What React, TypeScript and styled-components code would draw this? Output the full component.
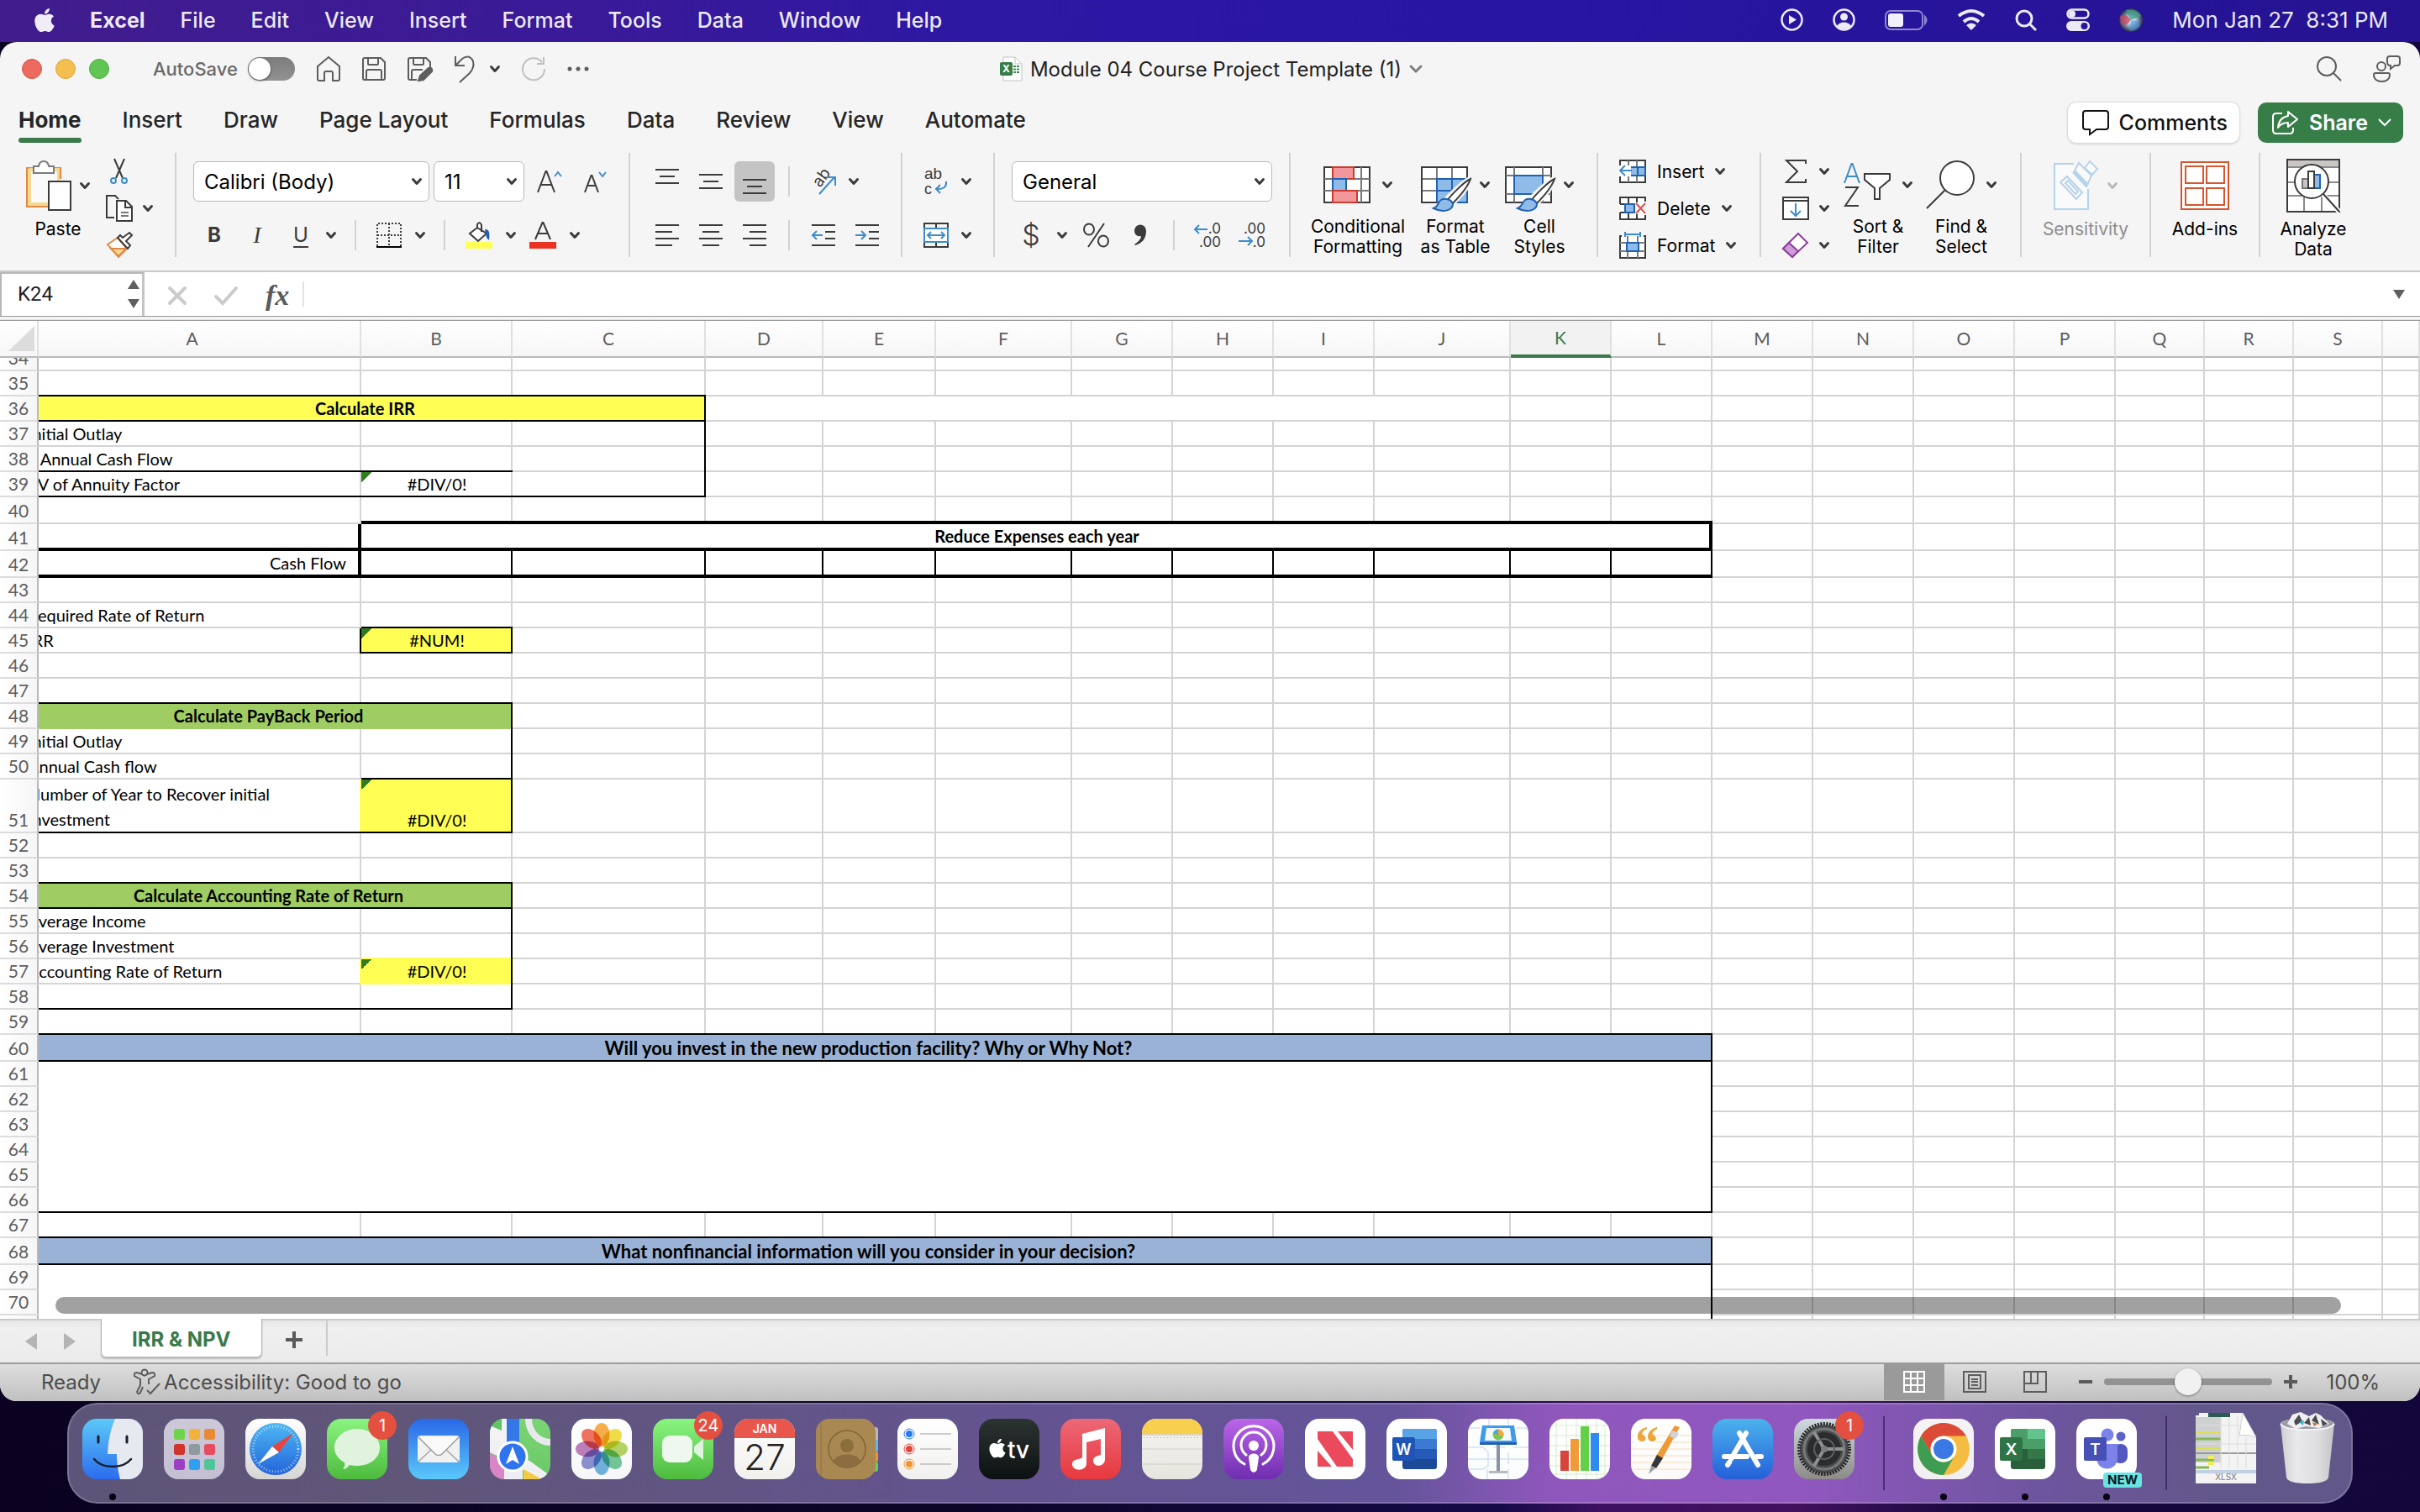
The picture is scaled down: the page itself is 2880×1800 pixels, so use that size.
import React from "react";
import styled, { createGlobalStyle, css } from "styled-components";
import { FaApple } from "react-icons/fa";

const UI = `Inter, "Liberation Sans", sans-serif`;
const SHEET = `Lato, "Open Sans", sans-serif`;
const INK = "#3b3b3b";
const BLUE = "#3d8ccb";
const DEEP = "#1f62b3";
const PALE = "#8fbbe8";
const GREEN = "#3a7a4a";
const GRID = "#d4d4d4";

const GlobalStyle = createGlobalStyle`
  *, *::before, *::after { box-sizing: border-box; }
  html, body { margin: 0; height: 100%; overflow: hidden; }
  body { font-family: ${UI}; color: #1f1f1f; -webkit-font-smoothing: antialiased; }
  button, input, select { font: inherit; color: inherit; border: 0; margin: 0; padding: 0; background: none; outline: none; }
  svg { display: block; overflow: visible; flex: none; }
`;

const Desktop = styled.div`
  display: flex;
  flex-direction: column;
  height: 100vh;
  background: linear-gradient(90deg, #0a0220 0%, #0d0528 40%, #150a48 62%, #3d1060 66%, #42115f 74%, #16083c 82%, #12063a 100%);
`;

/* ---------- system menu bar ---------- */
const MenuBar = styled.header`
  display: flex;
  align-items: center;
  flex: none;
  height: 50px;
  padding: 0 38px 3px 37px;
  color: rgba(255, 255, 255, 0.92);
  font-size: 25px;
  font-weight: 500;
  background: linear-gradient(90deg, #401c8c 0%, #3a1a98 24%, #2d18a3 40%, #2815a4 60%, #251392 100%);
`;
const Menus = styled.nav`
  display: flex;
  gap: 42px;
  margin-left: 38px;
`;
const MenuItem = styled.button<{ $strong?: boolean }>`
  line-height: 46px;
  font-weight: ${(p) => (p.$strong ? 700 : 500)};
`;
const Tray = styled.div`
  display: flex;
  align-items: center;
  gap: 35px;
  margin-left: auto;
`;
const Clock = styled.time`
  white-space: pre;
  font-size: 26px;
  font-weight: 400;
`;

/* ---------- window ---------- */
const Window = styled.main`
  display: flex;
  flex-direction: column;
  flex: 1;
  min-height: 0;
  overflow: hidden;
  border-radius: 20px;
  background: #f5f5f5;
`;
const TitleBar = styled.div`
  display: grid;
  grid-template-columns: 1fr auto 1fr;
  align-items: center;
  flex: none;
  height: 64px;
  padding: 0 23px 0 26px;
`;
const TitleSide = styled.div<{ $end?: boolean }>`
  display: flex;
  align-items: center;
  gap: ${(p) => (p.$end ? 37 : 26)}px;
  justify-content: ${(p) => (p.$end ? "flex-end" : "flex-start")};
`;
const Lights = styled.div`
  display: flex;
  gap: 16px;
  margin-right: 26px;
`;
const Light = styled.button<{ $c: string; $edge: string }>`
  width: 24px;
  height: 24px;
  border-radius: 50%;
  background: ${(p) => p.$c};
  border: 1px solid ${(p) => p.$edge};
`;
const AutoSave = styled.label`
  display: flex;
  align-items: center;
  gap: 12px;
  font-size: 22px;
  font-weight: 500;
  color: #6a6a6a;
`;
const Switch = styled.input`
  appearance: none;
  width: 56px;
  height: 28px;
  border-radius: 14px;
  background: linear-gradient(180deg, #7c7c7c, #929292);
  &::before {
    content: "";
    display: block;
    width: 26px;
    height: 26px;
    margin: 1px;
    border-radius: 50%;
    background: #fff;
    box-shadow: 0 1px 3px rgba(0, 0, 0, 0.5);
  }
`;
const IconButton = styled.button`
  display: flex;
  align-items: center;
  gap: 18px;
`;
const DocTitle = styled.h1`
  display: flex;
  align-items: center;
  gap: 9px;
  margin: 0;
  font-size: 24px;
  font-weight: 400;
  color: #222;
`;

const TabRow = styled.div`
  display: flex;
  align-items: flex-start;
  flex: none;
  height: 56px;
  padding: 0 20px 0 22px;
`;
const RibbonTabs = styled.nav`
  display: flex;
  gap: 49px;
`;
const RibbonTab = styled.button<{ $active?: boolean }>`
  height: 56px;
  padding-top: 8px;
  line-height: 42px;
  font-size: 26px;
  font-weight: ${(p) => (p.$active ? 700 : 500)};
  color: #262626;
  &::after {
    content: "";
    display: block;
    height: 6px;
    border-radius: 3px;
    background: ${(p) => (p.$active ? GREEN : "transparent")};
  }
`;
const TabActions = styled.div`
  display: flex;
  gap: 22px;
  margin: 8px 0 0 auto;
`;
const ActionButton = styled.button<{ $primary?: boolean }>`
  display: flex;
  align-items: center;
  gap: 12px;
  height: 48px;
  padding: 0 14px 0 17px;
  border-radius: 10px;
  font-size: 25px;
  font-weight: ${(p) => (p.$primary ? 600 : 500)};
  color: ${(p) => (p.$primary ? "#fff" : "#111")};
  background: ${(p) => (p.$primary ? "#377d48" : "#fff")};
  box-shadow: ${(p) => (p.$primary ? "none" : "0 0 0 1px #dcdcdc, 0 1px 3px rgba(0,0,0,.25)")};
`;

/* ---------- ribbon ---------- */
const Ribbon = styled.div`
  display: flex;
  flex: none;
  height: 154px;
  padding-top: 12px;
  border-bottom: 2px solid #c9c9c9;
`;
const Group = styled.section<{ $w: number; $pad?: number; $last?: boolean }>`
  display: flex;
  flex: none;
  width: ${(p) => p.$w}px;
  height: 124px;
  padding-left: ${(p) => p.$pad ?? 0}px;
  border-right: ${(p) => (p.$last ? "0" : "2px solid #d2d2d2")};
`;
const TwoRows = styled.div`
  display: grid;
  grid-template-rows: 48px 48px;
  gap: 16px;
  align-content: start;
  padding-top: 10px;
`;
const ThreeRows = styled.div`
  display: grid;
  grid-template-rows: repeat(3, 44px);
  align-content: start;
`;
const ToolRow = styled.div<{ $gap?: number }>`
  display: flex;
  align-items: center;
  gap: ${(p) => p.$gap ?? 0}px;
`;
const Tool = styled.button<{ $w?: number }>`
  display: flex;
  align-items: center;
  justify-content: center;
  flex: none;
  width: ${(p) => p.$w ?? 52}px;
  height: 100%;
`;
const Pressed = styled.span<{ $on?: boolean }>`
  display: flex;
  align-items: center;
  justify-content: center;
  width: 48px;
  height: 48px;
  border-radius: 6px;
  background: ${(p) => (p.$on ? "#c4c4c4" : "none")};
`;
const Glyph = styled.span<{ $kind?: "bold" | "italic" | "under" | "big" }>`
  font-size: 24px;
  line-height: 30px;
  color: ${INK};
  ${(p) => p.$kind === "bold" && css`font-weight: 700;`}
  ${(p) => p.$kind === "italic" && css`font-family: "Liberation Serif", serif; font-style: italic; font-size: 28px;`}
  ${(p) => p.$kind === "under" && css`text-decoration: underline; text-decoration-thickness: 2px; text-underline-offset: 5px;`}
  ${(p) => p.$kind === "big" && css`font-size: 34px; font-weight: 300;`}
`;
const Rule = styled.span<{ $m: number }>`
  flex: none;
  width: 2px;
  height: 36px;
  margin: 0 ${(p) => p.$m}px;
  background: #d2d2d2;
`;
const BigTool = styled.button<{ $w: number; $muted?: boolean }>`
  display: flex;
  flex-direction: column;
  align-items: center;
  justify-content: flex-start;
  gap: 8px;
  flex: none;
  width: ${(p) => p.$w}px;
  padding-top: 7px;
  font-size: 21px;
  line-height: 24px;
  color: ${(p) => (p.$muted ? "#8d8d8d" : "#000")};
`;
const BigIcon = styled.span<{ $gap?: number }>`
  display: flex;
  align-items: center;
  gap: ${(p) => p.$gap ?? 14}px;
  height: 64px;
`;
const LineTool = styled.button`
  display: flex;
  align-items: center;
  gap: 13px;
  font-size: 21px;
  color: #000;
`;
const SelectBox = styled.span<{ $w: number }>`
  position: relative;
  display: block;
  width: ${(p) => p.$w}px;
  height: 48px;
  svg {
    position: absolute;
    right: 9px;
    top: 20px;
    pointer-events: none;
  }
`;
const Select = styled.select`
  appearance: none;
  width: 100%;
  height: 100%;
  padding: 0 30px 0 12px;
  border: 1px solid #b9b9b9;
  border-radius: 6px;
  background: #fff;
  font-size: 24px;
  color: #000;
`;

/* ---------- formula bar ---------- */
const FormulaBar = styled.div`
  display: flex;
  align-items: center;
  flex: none;
  height: 52px;
  background: #fff;
`;
const NameBox = styled.div`
  display: flex;
  align-items: center;
  justify-content: space-between;
  width: 172px;
  height: 52px;
  padding: 0 3px 2px 19px;
  border: 2px solid #b8b8b8;
  border-bottom: 0;
  border-right: 3px solid #c4c4c4;
`;
const NameInput = styled.input`
  width: 110px;
  font-family: Roboto, sans-serif;
  font-size: 24px;
`;
const FormulaTools = styled.div`
  display: flex;
  align-items: center;
  gap: 33px;
  padding: 4px 16px 0 28px;
`;
const Fx = styled.button`
  font-family: "Liberation Serif", serif;
  font-style: italic;
  font-weight: 700;
  font-size: 34px;
  line-height: 36px;
  color: #5a5a5a;
`;
const FormulaInput = styled.input`
  flex: 1;
  height: 30px;
  border-left: 2px solid #e2e2e2;
  font-size: 24px;
`;
const DropButton = styled.button`
  padding-right: 18px;
`;
const DoubleLine = styled.div`
  flex: none;
  height: 6px;
  border-top: 1px solid #9a9a9a;
  border-bottom: 1px solid #9a9a9a;
  background: linear-gradient(180deg, #e2e2e2, #fff 50%, #d8d8d8);
`;

/* ---------- sheet ---------- */
const SheetArea = styled.div`
  position: relative;
  flex: 1;
  min-height: 0;
`;
const Scroller = styled.div`
  height: 100%;
  overflow: hidden;
  background: #fff;
`;
const Table = styled.table`
  table-layout: fixed;
  width: calc(100% + 17px);
  margin: -14px 0 0 -17px;
  border-collapse: separate;
  border-spacing: 0;
  font-family: ${SHEET};
  font-size: 20px;
  line-height: 28px;
  color: #000;
  white-space: nowrap;
`;
const ColHead = styled.th<{ $on?: boolean }>`
  position: sticky;
  top: 0;
  z-index: 2;
  height: 44px;
  padding: 0;
  overflow: hidden;
  font-weight: 400;
  font-size: 21px;
  vertical-align: middle;
  color: ${(p) => (p.$on ? GREEN : "#5e5e5e")};
  background: ${(p) => (p.$on ? "#f2f2f2" : "linear-gradient(180deg, #fff, #f6f6f6)")};
  border-right: 2px solid #e0e0e0;
  border-bottom: ${(p) => (p.$on ? `4px solid ${GREEN}` : "2px solid #b9b9b9")};
`;
const Corner = styled(ColHead)`
  left: 0;
  z-index: 3;
  svg {
    margin-left: 10px;
  }
`;
const RowHead = styled.th`
  position: sticky;
  left: 0;
  z-index: 1;
  padding: 0;
  font-weight: 400;
  font-size: 21px;
  text-align: center;
  vertical-align: bottom;
  color: #5e5e5e;
  background: linear-gradient(90deg, #fff, #f6f6f6);
  border-right: 2px solid #b9b9b9;
  border-bottom: 2px solid #dcdcdc;
`;
type CellStyle = {
  $bg?: string; $b?: string; $bw?: number; $r?: string; $rw?: number;
  $align?: string; $strong?: boolean; $flag?: boolean; $wrap?: boolean; $large?: boolean;
};
/* Edges are painted as background strips so that a dark edge always runs
   unbroken over the light gridlines that meet it. */
const edges = (p: CellStyle) => {
  const b = p.$b ?? GRID;
  const r = p.$r ?? GRID;
  const bottom = `linear-gradient(${b}, ${b}) 0 100% / 100% ${p.$bw ?? 2}px no-repeat`;
  const right = `linear-gradient(${r}, ${r}) 100% 0 / ${p.$rw ?? 2}px 100% no-repeat`;
  const flag = p.$flag ? "linear-gradient(135deg, #2f7d1e 50%, transparent 50%) 0 0 / 12px 12px no-repeat, " : "";
  const pair = b === "#000" ? `${bottom}, ${right}` : `${right}, ${bottom}`;
  return `${flag}${pair}, ${p.$bg ?? "#fff"}`;
};
const Cell = styled.td<CellStyle>`
  overflow: hidden;
  padding: 0 ${(p) => (p.$align === "right" || p.$wrap ? 18 : 4)}px ${(p) => p.$bw ?? 2}px 4px;
  vertical-align: bottom;
  text-align: ${(p) => p.$align ?? "left"};
  font-weight: ${(p) => (p.$strong ? 700 : 400)};
  font-size: ${(p) => (p.$large ? 22 : 20)}px;
  line-height: ${(p) => (p.$wrap ? 30 : 28)}px;
  white-space: ${(p) => (p.$wrap ? "normal" : "pre")};
  background: ${edges};
`;
const HScroll = styled.div`
  position: absolute;
  left: 66px;
  right: 94px;
  bottom: 6px;
  height: 20px;
  border-radius: 10px;
  background: rgba(0, 0, 0, 0.37);
`;

type CellSpec = {
  n?: number; rows?: number; t?: string; bg?: string; b?: string; bw?: number; r?: string; rw?: number;
  align?: string; strong?: boolean; flag?: boolean; wrap?: boolean; large?: boolean;
};
type RowSpec = { no: number | null; h?: number; skip?: number; cells?: CellSpec[] };

const K = "#000";
const YEL = "#fffe54";
const GRN = "#a0cd63";
const BLU = "#9ab2d5";
const blanks = (n: number, extra: CellSpec = {}): CellSpec[] => Array.from({ length: n }, () => ({ ...extra }));

const ROWS: RowSpec[] = [
  { no: 34 },
  { no: 35, cells: blanks(3, { b: K }) },
  { no: 36, cells: [{ n: 3, t: "Calculate IRR", bg: YEL, b: K, r: K, align: "center", strong: true }, { n: 7 }] },
  { no: 37, cells: [{ t: "Initial Outlay" }, {}, { r: K }] },
  { no: 38, cells: [{ t: "   Annual Cash Flow", b: K }, { b: K }, { r: K }] },
  { no: 39, cells: [{ t: "PV of Annuity Factor", b: K }, { t: "#DIV/0!", align: "center", flag: true, b: K }, { b: K, r: K }] },
  { no: 40, h: 32, cells: [{}, ...blanks(11, { b: K, bw: 4 })] },
  { no: 41, h: 32, cells: [{ b: K, bw: 4, r: K, rw: 4 }, { n: 11, t: "Reduce Expenses each year", align: "center", strong: true, b: K, bw: 4, r: K, rw: 4 }] },
  { no: 42, h: 32, cells: [{ t: "Cash Flow", align: "right", b: K, bw: 4, r: K, rw: 4 }, ...blanks(11, { b: K, bw: 4, r: K })] },
  { no: 43 },
  { no: 44, cells: [{ t: "Required Rate of Return" }, { b: K }] },
  { no: 45, cells: [{ t: "IRR", r: K }, { t: "#NUM!", align: "center", flag: true, bg: YEL, b: K, r: K }] },
  { no: 46 },
  { no: 47, cells: blanks(2, { b: K }) },
  { no: 48, cells: [{ n: 2, t: "Calculate PayBack Period", bg: GRN, b: GRN, r: K, align: "center", strong: true }] },
  { no: 49, cells: [{ t: "Initial Outlay" }, { r: K }] },
  { no: 50, cells: [{ t: "Annual Cash flow" }, { r: K, b: K }] },
  { no: 51, h: 64, cells: [{ t: "Number of Year to Recover initial Investment", wrap: true, b: K, r: YEL }, { t: "#DIV/0!", align: "center", flag: true, bg: YEL, b: K, r: K }] },
  { no: 52 },
  { no: 53, cells: blanks(2, { b: K }) },
  { no: 54, cells: [{ n: 2, t: "Calculate Accounting Rate of Return", bg: GRN, b: K, r: K, align: "center", strong: true }] },
  { no: 55, cells: [{ t: "Average Income" }, { r: K }] },
  { no: 56, cells: [{ t: "Average Investment" }, { r: K, b: YEL }] },
  { no: 57, cells: [{ t: "Accounting Rate of Return", r: YEL }, { t: "#DIV/0!", align: "center", flag: true, bg: YEL, b: YEL, r: K }] },
  { no: 58, cells: [{ b: K }, { b: K, r: K }] },
  { no: 59, cells: blanks(12, { b: K }) },
  { no: 60, h: 32, cells: [{ n: 12, t: "Will you invest in the new production facility? Why or Why Not?", bg: BLU, b: K, r: K, align: "center", strong: true, large: true }] },
  { no: 61, cells: [{ n: 12, rows: 6, b: K, r: K }] },
  { no: 62, skip: 12 }, { no: 63, skip: 12 }, { no: 64, skip: 12 }, { no: 65, skip: 12 }, { no: 66, skip: 12 },
  { no: 67, cells: blanks(12, { b: K }) },
  { no: 68, h: 32, cells: [{ n: 12, t: "What nonfinancial information will you consider in your decision?", bg: BLU, b: K, r: K, align: "center", strong: true, large: true }] },
  { no: 69, cells: [{ n: 12, rows: 3, r: K }] },
  { no: 70, skip: 12 }, { no: null, skip: 12 },
];
const COLS: [string, number | undefined][] = [
  ["A", 401], ["B", 180], ["C", 230], ["D", 140], ["E", 134], ["F", 162], ["G", 120], ["H", 120], ["I", 120], ["J", 162],
  ["K", 120], ["L", 120], ["M", 120], ["N", 120], ["O", 120], ["P", 120], ["Q", 106], ["R", 106], ["S", 106], ["", undefined],
];

const Sheet = () => (
  <Table>
    <colgroup>
      <col width={46} />
      {COLS.map(([l, w], i) => <col key={l || i} width={w} />)}
    </colgroup>
    <thead>
      <tr>
        <Corner aria-label="Select all">
          <svg width="31" height="30" viewBox="0 0 31 30"><path d="M31 0V30H0Z" fill="#dcdcdc" /></svg>
        </Corner>
        {COLS.map(([l], i) => <ColHead key={l || i} $on={l === "K"} scope="col">{l}</ColHead>)}
      </tr>
    </thead>
    <tbody>
      {ROWS.map((row, ri) => {
        const cells = row.cells ?? [];
        const used = (row.skip ?? 0) + cells.reduce((s, c) => s + (c.n ?? 1), 0);
        const all = [...cells, ...blanks(COLS.length - used)];
        return (
          <tr key={ri} style={{ height: row.h ?? 30 }}>
            <RowHead scope="row">{row.no}</RowHead>
            {all.map((c, i) => (
              <Cell key={i} colSpan={c.n} rowSpan={c.rows} $bg={c.bg} $b={c.b} $bw={c.bw} $r={c.r} $rw={c.rw}
                $align={c.align} $strong={c.strong} $flag={c.flag} $wrap={c.wrap} $large={c.large}>{c.t}</Cell>
            ))}
          </tr>
        );
      })}
    </tbody>
  </Table>
);

/* ---------- sheet tabs and status ---------- */
const SheetTabs = styled.div`
  display: flex;
  flex: none;
  height: 54px;
  padding-left: 30px;
  border-top: 2px solid #cbcbcb;
  border-bottom: 2px solid #9c9c9c;
  background: linear-gradient(180deg, #e6e6e6, #f0f0f0 20%, #ebebeb);
`;
const TabArrows = styled.div`
  display: flex;
  gap: 32px;
  padding: 15px 30px 0 0;
  height: 40px;
`;
const SheetTab = styled.button`
  height: 46px;
  margin-top: -2px;
  padding: 4px 36px 0;
  border: 1px solid #b4b4b4;
  border-top: 0;
  border-radius: 0 0 6px 6px;
  background: #fff;
  box-shadow: 0 2px 2px rgba(0, 0, 0, 0.2);
  font-size: 24px;
  font-weight: 700;
  color: ${GREEN};
`;
const AddTab = styled.button`
  display: flex;
  justify-content: center;
  align-items: center;
  width: 78px;
  height: 42px;
  padding-top: 4px;
  border-right: 2px solid #cbcbcb;
`;
const StatusBar = styled.footer`
  display: flex;
  align-items: center;
  flex: none;
  height: 44px;
  padding: 0 0 2px 49px;
  font-size: 24px;
  color: #4c4c4c;
  background: linear-gradient(180deg, #dedede, #c0c0c0);
`;
const Access = styled.button`
  display: flex;
  align-items: center;
  gap: 3px;
  margin-left: 38px;
`;
const StatusRight = styled.div`
  display: flex;
  align-items: center;
  height: 44px;
  margin-left: auto;
  padding-right: 48px;
`;
const ViewButton = styled.button<{ $on?: boolean }>`
  display: flex;
  align-items: center;
  justify-content: center;
  width: 72px;
  height: 44px;
  background: ${(p) => (p.$on ? "#9a9a9a" : "none")};
`;
const ZoomControl = styled.label`
  display: flex;
  align-items: center;
  gap: 14px;
  padding: 0 34px 0 16px;
`;
const ZoomRange = styled.input`
  appearance: none;
  width: 200px;
  height: 34px;
  &::-webkit-slider-runnable-track {
    height: 8px;
    border-radius: 4px;
    background: #929292;
  }
  &::-webkit-slider-thumb {
    appearance: none;
    width: 32px;
    height: 32px;
    margin-top: -12px;
    border-radius: 50%;
    background: #f1f1f1;
    box-shadow: 0 1px 3px rgba(0, 0, 0, 0.4);
  }
`;

/* ---------- dock ---------- */
const Dock = styled.nav`
  display: flex;
  flex: none;
  gap: 25px;
  width: max-content;
  height: 120px;
  margin: 2px auto 10px;
  padding: 17px 16px 0;
  border: 2px solid rgba(255, 255, 255, 0.18);
  border-radius: 36px;
  background: linear-gradient(90deg, #5d5479 0%, #5f5678 15%, #63548f 40%, #64549a 58%, #8f57bc 65%, #9057bf 76%, #6f55a0 86%, #62578a 94%, #615789 100%);
`;
const DockItem = styled.button`
  position: relative;
  display: flex;
  justify-content: center;
  width: 72px;
  height: 72px;
`;
const DockRule = styled.span`
  width: 2px;
  height: 88px;
  margin: -3px 9px 0;
  background: rgba(40, 15, 80, 0.6);
`;
const Badge = styled.span`
  position: absolute;
  left: 49px;
  top: -9px;
  width: 34px;
  height: 34px;
  border-radius: 50%;
  background: #e4503f;
  color: #fff;
  font-size: 20px;
  line-height: 34px;
  text-align: center;
`;
const RunDot = styled.span`
  position: absolute;
  left: 32px;
  bottom: -25px;
  width: 8px;
  height: 8px;
  border-radius: 50%;
  background: #05010f;
`;
const NewTag = styled.span`
  position: absolute;
  left: 32px;
  bottom: -10px;
  padding: 0 5px;
  border-radius: 4px;
  background: #6be3e4;
  color: #071a1e;
  font-size: 15px;
  line-height: 18px;
  font-weight: 700;
`;

/* ---------- shared icon helpers ---------- */
type S = { w: number; h: number; children?: React.ReactNode; stroke?: string; sw?: number };
const Svg = ({ w, h, children, stroke = INK, sw = 2 }: S) => (
  <svg width={w} height={h} viewBox={`0 0 ${w} ${h}`} fill="none" stroke={stroke} strokeWidth={sw}>{children}</svg>
);
const Chevron = ({ c = INK }: { c?: string }) => (
  <Svg w={12} h={8} stroke={c} sw={3}><path d="M1.5 1.5 6 6.5 10.5 1.5" strokeLinecap="round" strokeLinejoin="round" /></Svg>
);
const Lines = ({ rows }: { rows: [number, number][] }) => (
  <Svg w={28} h={rows.length === 3 ? 18 : 26}>
    {rows.map(([a, b], i) => <path key={i} d={`M${a} ${i * 8 + 1}H${b}`} />)}
  </Svg>
);
const Plus = () => <Svg w={20} h={20} stroke="#5a5a5a" sw={4}><path d="M10 0V20M0 10H20" /></Svg>;

const Brush = () => (
  <>
    <path d="M60 14C52 18 34 33 27 44L32 49C41 42 56 26 60 14Z" fill="#fff" stroke="#f5f5f5" strokeWidth="6" />
    <path d="M59 15C52 18 37 33 31 41L36 46C44 38 56 24 59 15Z" fill="#fff" stroke={INK} />
    <path d="M15 50C21 48 20 43 24 40C29 37 37 40 38 45C38 52 27 56 15 50Z" fill={PALE} stroke={DEEP} />
  </>
);

/* ---------- dock icon art ---------- */
const Tile = ({ id, top, bottom, children }: { id: string; top: string; bottom: string; children?: React.ReactNode }) => (
  <svg width="72" height="72" viewBox="0 0 72 72">
    <defs>
      <linearGradient id={id} x1="0" y1="0" x2="0" y2="1"><stop offset="0" stopColor={top} /><stop offset="1" stopColor={bottom} /></linearGradient>
      <clipPath id={id + "c"}><rect width="72" height="72" rx="17" /></clipPath>
    </defs>
    <g clipPath={`url(#${id}c)`}>
      <rect width="72" height="72" fill={`url(#${id})`} />
      {children}
    </g>
  </svg>
);
const art = {
  finder: (
    <Tile id="fi" top="#5cc9f9" bottom="#2b6cee">
      <path d="M39 0C33 14 31 26 30 42H41C41 54 43 64 45 72H72V0Z" fill="#e6e9ef" />
      <path d="M19 21V28M53 21V28" stroke="#16202c" strokeWidth="3" strokeLinecap="round" />
      <path d="M14 48C24 60 48 60 58 48" stroke="#16202c" strokeWidth="2.5" fill="none" strokeLinecap="round" />
    </Tile>
  ),
  launchpad: (
    <Tile id="lp" top="#cdc9d8" bottom="#c4bfd2">
      {["#6fd34a", "#f2b338", "#e98a35", "#d0342b", "#8f9a9c", "#e84a5f", "#9b3fc4", "#2f9ff0", "#4fc59a"].map((c, i) => (
        <rect key={i} x={12 + (i % 3) * 18} y={12 + Math.floor(i / 3) * 18} width="13" height="13" rx="3" fill={c} />
      ))}
    </Tile>
  ),
  safari: (
    <Tile id="sa" top="#ffffff" bottom="#d6d6d6">
      <defs><linearGradient id="sab" x1="0" y1="0" x2="0" y2="1"><stop offset="0" stopColor="#4eb8f2" /><stop offset="1" stopColor="#2364da" /></linearGradient></defs>
      <circle cx="36" cy="36" r="31" fill="url(#sab)" />
      <circle cx="36" cy="36" r="27" fill="none" stroke="#fff" strokeOpacity=".6" strokeWidth="3" strokeDasharray="1 2.5" />
      <path d="M57 17 40 40 32 33Z" fill="#e8453a" />
      <path d="M15 54 32 33 40 40Z" fill="#fff" />
    </Tile>
  ),
  messages: (
    <Tile id="ms" top="#8af480" bottom="#4dbb3e">
      <path d="M36 12C51 12 63 22 63 34.500C63 47 51 56 36 56C33 56 30 55.600 27 55C25 58 22 60 19 60C21 57 22 55 21 52C14 48 9 42 9 34.500C9 22 21 12 36 12Z" fill="#e0f3dd" />
    </Tile>
  ),
  mail: (
    <Tile id="ml" top="#2a68e6" bottom="#5bc8fb">
      <rect x="11" y="20" width="50" height="32" rx="4" fill="#f1f1f1" />
      <path d="M12 51 29 35M60 51 43 35" stroke="#a5a5a5" strokeWidth="1.500" />
      <path d="M12 22 32 42C34 44 38 44 40 42L60 22" stroke="#9c9c9c" strokeWidth="1.500" fill="#fafafa" />
    </Tile>
  ),
  maps: (
    <Tile id="mp" top="#7ad474" bottom="#6bc968">
      <path d="M0 0H14V36L0 22Z" fill="#5fc463" />
      <path d="M0 20 20 38V0H14V14L0 8Z" fill="#f3f3f5" />
      <path d="M0 40 20 56V72H0Z" fill="#da86c6" />
      <path d="M0 20 50 52 72 68V72H54L30 54 0 40Z" fill="#f0f0f3" />
      <path d="M40 60 62 72H40Z" fill="#f6c945" />
      <rect x="20" width="15" height="72" fill="#3478e8" />
      <rect x="17" y="50" width="22" height="22" fill="#eceef3" />
      <path d="M46 0C46 16 58 28 72 28" stroke="#e9e9ec" strokeWidth="8" fill="none" />
      <circle cx="27" cy="45" r="17" fill="#2f74ee" stroke="#fff" strokeWidth="3" />
      <path d="M27 33 35 54 27 49 19 54Z" fill="#fff" />
    </Tile>
  ),
  photos: (
    <Tile id="ph" top="#ffffff" bottom="#f6f6f8">
      {["#f5a12a", "#f0d829", "#a9cf4a", "#5fc08c", "#5ba8dc", "#7b7fc9", "#b56bb3", "#ef5a45"].map((c, i) => (
        <ellipse key={c} cx="36" cy="19" rx="9.500" ry="14" fill={c} fillOpacity=".85" transform={`rotate(${i * 45} 36 36)`} style={{ mixBlendMode: "multiply" }} />
      ))}
    </Tile>
  ),
  facetime: (
    <Tile id="ft" top="#8af480" bottom="#4dbb3e">
      <rect x="11" y="20" width="36" height="32" rx="9" fill="#eff8ee" />
      <path d="M49 33 60 24V49L49 40Z" fill="#e0f3de" />
    </Tile>
  ),
  calendar: (
    <Tile id="ca" top="#ffffff" bottom="#f1f0ec">
      <rect width="72" height="23" fill="#e9564b" />
      <text x="36" y="17" textAnchor="middle" fontSize="14" fontWeight="600" fill="#fff" fontFamily="Inter">JAN</text>
      <text x="36" y="61" textAnchor="middle" fontSize="42" fontWeight="300" fill="#222" fontFamily="Inter">27</text>
    </Tile>
  ),
  contacts: (
    <svg width="72" height="72" viewBox="0 0 72 72">
      <rect x="60" y="10" width="14" height="17" rx="3" fill="#b9b9b5" />
      <rect x="60" y="25" width="14" height="14" rx="2" fill="#62b8e2" />
      <rect x="60" y="39" width="14" height="12" rx="2" fill="#ee9434" />
      <rect x="60" y="51" width="14" height="12" rx="3" fill="#6cc95c" />
      <rect width="71" height="72" rx="16" fill="#a98852" />
      <path d="M6 3V69" stroke="#8d6f40" strokeOpacity=".6" strokeWidth="1.500" />
      <circle cx="37" cy="36" r="22" fill="none" stroke="#806538" strokeWidth="1.500" />
      <circle cx="37" cy="32" r="8" fill="#8b6d3f" />
      <path d="M21 50C25 40 49 40 53 50C46 60 28 60 21 50Z" fill="#8b6d3f" />
    </svg>
  ),
  reminders: (
    <Tile id="rm" top="#ffffff" bottom="#f1f0ee">
      {["#2878f0", "#e2463b", "#ef9432"].map((c, i) => (
        <g key={c}>
          <circle cx="14" cy={18 + i * 18} r="4" fill={c} />
          <circle cx="14" cy={18 + i * 18} r="6" fill="none" stroke={c} />
          <path d={`M27 ${18 + i * 18}H64`} stroke="#bcbcbc" strokeWidth="1.500" />
        </g>
      ))}
    </Tile>
  ),
  tv: (
    <Tile id="tv" top="#2c3432" bottom="#0c1012">
      <FaApple x={9} y={22} size={26} color="#fff" />
      <text x="34" y="47" fontSize="28" fontWeight="500" fill="#fff" fontFamily="Inter">tv</text>
    </Tile>
  ),
  music: (
    <Tile id="mu" top="#ec6877" bottom="#e7383e">
      <path d="M26 18 53 11V48C53 58 39 58 39 50C39 44 46 44 48 43V24L31 28V53C31 63 14 63 14 54C14 47 24 49 26 46Z" fill="#fff" />
    </Tile>
  ),
  notes: (
    <Tile id="nt" top="#f6f5f2" bottom="#e6e4dd">
      <rect width="72" height="18" fill="#f8d04d" />
      <path d="M0 19H72" stroke="#c6b98a" />
      <path d="M2 22.500H72" stroke="#a6a6a6" strokeDasharray="1 3" />
      <path d="M0 36H72M0 54H72" stroke="#d0cfca" />
    </Tile>
  ),
  podcasts: (
    <Tile id="pc" top="#bb66e8" bottom="#6f2daf">
      <g fill="none" stroke="#fff" strokeWidth="3" strokeLinecap="round">
        <path d="M25 54A24 24 0 1 1 47 54" /><path d="M27 43A15 15 0 1 1 45 43" />
      </g>
      <circle cx="36" cy="32" r="6" fill="#fff" />
      <path d="M30 46C30 40 42 40 42 46L40 60C39 65 33 65 32 60Z" fill="#fff" />
    </Tile>
  ),
  news: (
    <Tile id="nw" top="#ffffff" bottom="#ffffff">
      <rect x="15" y="15" width="42" height="42" fill="#ea4a5b" />
      <path d="M15 24V38L32 57H38ZM33 15H39L57 37V48Z" fill="#fff" />
    </Tile>
  ),
  word: (
    <Tile id="wd" top="#ffffff" bottom="#ffffff">
      <rect x="19" y="12" width="41" height="48" rx="3" fill="#1c4a97" />
      <path d="M19 15Q19 12 22 12H57Q60 12 60 15V24H19Z" fill="#58a2e6" />
      <rect x="19" y="24" width="41" height="12" fill="#3b7ad0" />
      <rect x="19" y="36" width="41" height="12" fill="#255ab7" />
      <rect x="7" y="22" width="27" height="28" rx="2" fill="#1f55b8" />
      <text x="20.500" y="43" textAnchor="middle" fontSize="18" fontWeight="600" fill="#fff" fontFamily="Inter">W</text>
    </Tile>
  ),
  keynote: (
    <Tile id="kn" top="#ffffff" bottom="#fbfcfd">
      <path d="M0 11H14M58 11H72M0 34H18L24 40V56L18 60H0M30 34H44M54 34H72M48 40V54M0 48H72M23 60V72M48 60V72M25 0V8M48 0V8" stroke="#cfe2f4" strokeWidth="1.500" fill="none" />
      <path d="M17 8H55L58 28H14Z" fill="#3f9bea" />
      <path d="M22 11H50L52 26H20Z" fill="#f4f8fc" />
      <circle cx="36" cy="19" r="6.500" fill="#7cc653" /><path d="M36 19V12.500A6.500 6.500 0 0 1 42 21Z" fill="#f2a83a" /><path d="M36 19V12.500A6.500 6.500 0 0 0 30 17Z" fill="#4aa3e4" />
      <path d="M14 28H58V31H14Z" fill="#1f5fb4" />
      <path d="M36 31V63" stroke="#8a93a0" strokeWidth="4" />
      <rect x="25" y="62" width="22" height="3" fill="#b5b9bf" />
    </Tile>
  ),
  numbers: (
    <Tile id="nu" top="#ffffff" bottom="#fbfdfb">
      <path d="M8 0V72M20 0V72M32 0V72M44 0V72M56 0V72M66 0V72M0 8H72M0 20H72M0 32H72M0 44H72M0 56H72M0 66H72" stroke="#d4ecd0" />
      <rect x="13" y="38" width="10" height="24" fill="#d8433c" />
      <rect x="25" y="24" width="10" height="38" fill="#f09a38" />
      <rect x="37" y="9" width="10" height="53" fill="#62d048" />
      <rect x="49" y="17" width="10" height="45" fill="#2f8bf2" />
    </Tile>
  ),
  pages: (
    <Tile id="pg" top="#ffffff" bottom="#fbfaf8">
      <path d="M0 20H72M0 28H72M0 36H72M0 44H72M0 52H72M0 60H72" stroke="#f6dcbc" />
      <rect x="4" y="6" width="26" height="23" fill="#fff" />
      <text x="5" y="48" fontSize="56" fontWeight="700" fill="#eea63c" fontFamily="Liberation Serif">“</text>
      <path d="M52 8 58 10 36 50 29 46Z" fill="#ee9a36" />
      <path d="M49 14 57 17 53 24 46 21Z" fill="#cfd3d8" />
      <path d="M31 43 38 47 30 59 24 56Z" fill="#34363a" />
      <path d="M24 56 29 59 21 66Z" fill="#9ba0a6" />
    </Tile>
  ),
  store: (
    <Tile id="as" top="#4cb3ee" bottom="#245fd8">
      <g stroke="#fff" strokeWidth="6" strokeLinecap="round">
        <path d="M32 17 54 55" /><path d="M40 17 22 48" /><path d="M14 45H41M53 45H58" /><path d="M20 52 18 55" />
      </g>
    </Tile>
  ),
  settings: (
    <Tile id="se" top="#cfdadf" bottom="#8c8b88">
      <circle cx="36" cy="36" r="29" fill="#4a4b4c" />
      <circle cx="36" cy="36" r="30" fill="none" stroke="#232324" strokeWidth="4" strokeDasharray="2 1.500" />
      <circle cx="36" cy="36" r="24" fill="none" stroke="#77797b" strokeWidth="3" />
      <circle cx="36" cy="36" r="20" fill="#2b2c2d" />
      <path d="M36 36 24 16M36 36H59M36 36 24 56" stroke="#8f9193" strokeWidth="4" />
      <circle cx="36" cy="36" r="12" fill="none" stroke="#5d5f61" strokeWidth="2" />
      <circle cx="36" cy="36" r="4" fill="#7b7d7f" />
    </Tile>
  ),
  chrome: (
    <Tile id="ch" top="#f4f4f6" bottom="#f1eff2">
      <circle cx="36" cy="36" r="31" fill="#f4bd42" />
      <path d="M9.200 20.500A31 31 0 0 1 62.800 20.500H36A15.500 15.500 0 0 0 22.600 43.700Z" fill="#dc4a38" />
      <path d="M9.200 20.500A31 31 0 0 0 36 67L49.400 43.800A15.500 15.500 0 0 1 22.600 43.800Z" fill="#3f9d53" />
      <circle cx="36" cy="36" r="15.500" fill="#fff" />
      <circle cx="36" cy="36" r="12" fill="#3a78e4" />
    </Tile>
  ),
  excel: (
    <Tile id="ex" top="#ffffff" bottom="#ffffff">
      <rect x="19" y="12" width="41" height="48" rx="3" fill="#2b5f3c" />
      <path d="M19 15Q19 12 22 12H39V36H19Z" fill="#4a9f69" />
      <path d="M39 12H57Q60 12 60 15V24H39Z" fill="#62c48c" />
      <rect x="39" y="24" width="21" height="12" fill="#4a9f69" />
      <rect x="39" y="36" width="21" height="12" fill="#36774a" />
      <rect x="6" y="22" width="27" height="28" rx="2" fill="#2f7446" />
      <text x="19.500" y="43" textAnchor="middle" fontSize="19" fontWeight="600" fill="#fff" fontFamily="Inter">X</text>
    </Tile>
  ),
  teams: (
    <Tile id="tm" top="#ffffff" bottom="#ffffff">
      <circle cx="53" cy="21" r="5.500" fill="#5b62c9" />
      <rect x="44" y="30" width="17" height="23" rx="8" fill="#5158c0" />
      <circle cx="37" cy="19" r="7.500" fill="#7b83ea" />
      <path d="M24 30H49V46C49 64 24 64 24 46Z" fill="#7b83ea" />
      <rect x="9" y="22" width="27" height="28" rx="2" fill="#4750b5" />
      <text x="22.500" y="43" textAnchor="middle" fontSize="19" fontWeight="600" fill="#fff" fontFamily="Inter">T</text>
    </Tile>
  ),
  doc: (
    <svg width="72" height="72" viewBox="0 0 72 72">
      <path d="M0 -4H4V-7H56L72 22V77H0Z" fill="#f3f3f3" />
      <rect x="15" y="-7" width="26" height="5" fill="#2c5a55" />
      <rect x="0" y="-2" width="30" height="54" fill="#cfd1d0" />
      <path d="M0 17H30M0 36H30" stroke="#dfe04d" strokeWidth="2" />
      <path d="M0 24H30M0 49H22M0 58H16" stroke="#86b85a" strokeWidth="3" />
      <rect x="15" y="44" width="7" height="4" fill="#f2ee4a" /><rect x="15" y="51" width="7" height="4" fill="#f2ee4a" />
      <path d="M0 41H72" stroke="#9b9b9b" strokeWidth="2" />
      <path d="M30 -2V60M40 -2V60M50 -2V60M60 22V60M0 8H52M0 30H72" stroke="#dcdcdc" strokeWidth="1" />
      <rect x="0" y="61" width="72" height="4" fill="#c3cfe2" />
      <path d="M56 -7 52 20Q60 18 72 22Z" fill="#fff" stroke="#cfcfcf" />
      <text x="36" y="73" textAnchor="middle" fontSize="10" fill="#777" fontFamily="Inter">XLSX</text>
    </svg>
  ),
  trash: (
    <svg width="64" height="72" viewBox="0 0 64 72">
      <defs><linearGradient id="bin" x1="0" y1="0" x2="1" y2="0"><stop offset="0" stopColor="#cfcfd3" /><stop offset=".3" stopColor="#e9e9eb" /><stop offset=".7" stopColor="#dedee0" /><stop offset="1" stopColor="#c4c4c8" /></linearGradient></defs>
      <path d="M0 6Q0 0 32 0Q64 0 64 6L57 70Q55 77 32 77Q9 77 7 70Z" fill="url(#bin)" />
      <ellipse cx="32" cy="6" rx="31" ry="7" fill="#9c9da2" />
      <path d="M8 6 14 -5 24 -8 34 -3 42 -7 48 -4 58 6 46 11 30 9 18 12Z" fill="#f0f0f2" />
      <path d="M16 3 22 -5 26 3 18 8ZM28 5 34 -2 36 8ZM37 2 42 -5 46 7ZM48 0 56 6 50 9Z" fill="#4b4c52" />
      <path d="M22 4 28 2 27 8Z" fill="#37b9c9" /><path d="M38 4 44 6 40 9Z" fill="#c76a3a" />
      <path d="M0 6Q4 13 32 13Q60 13 64 6" fill="none" stroke="#f4f4f6" strokeWidth="2" />
    </svg>
  ),
};

type DockEntry = { name: keyof typeof art; label: string; badge?: string; run?: boolean; tag?: string } | "rule";
const DOCK: DockEntry[] = [
  { name: "finder", label: "Finder", run: true }, { name: "launchpad", label: "Launchpad" }, { name: "safari", label: "Safari" },
  { name: "messages", label: "Messages", badge: "1" }, { name: "mail", label: "Mail" }, { name: "maps", label: "Maps" },
  { name: "photos", label: "Photos" }, { name: "facetime", label: "FaceTime", badge: "24" }, { name: "calendar", label: "Calendar" },
  { name: "contacts", label: "Contacts" }, { name: "reminders", label: "Reminders" }, { name: "tv", label: "TV" },
  { name: "music", label: "Music" }, { name: "notes", label: "Notes" }, { name: "podcasts", label: "Podcasts" }, { name: "news", label: "News" },
  { name: "word", label: "Word" }, { name: "keynote", label: "Keynote" }, { name: "numbers", label: "Numbers" }, { name: "pages", label: "Pages" },
  { name: "store", label: "App Store" }, { name: "settings", label: "System Settings", badge: "1" }, "rule",
  { name: "chrome", label: "Chrome", run: true }, { name: "excel", label: "Excel", run: true }, { name: "teams", label: "Teams", run: true, tag: "NEW" }, "rule",
  { name: "doc", label: "Downloads" }, { name: "trash", label: "Trash" },
];

/* ---------- ribbon groups ---------- */
const Clipboard = () => (
  <Group $w={210} $pad={16}>
    <BigTool $w={106} aria-label="Paste">
      <BigIcon $gap={10}>
        <Svg w={54} h={60}>
          <path d="M42 9H1V55H26" stroke="#e28a45" /><path d="M41 22V9H30M1 9V55H26" stroke="#e28a45" />
          <path d="M4 11H38V26M4 11V52H26" stroke="#f5d991" strokeWidth="4" />
          <rect x="6" y="13" width="31" height="37" fill="#fafafa" stroke="none" />
          <path d="M9 15V7H15C16 -1 26 -1 27 7H33V15Z" fill="#fff" stroke="#7a7a7a" />
          <rect x="27" y="25" width="26" height="34" fill="#fff" />
        </Svg>
        <Chevron />
      </BigIcon>
      Paste
    </BigTool>
    <ThreeRows>
      <ToolRow>
        <Tool $w={40} aria-label="Cut">
          <Svg w={22} h={32}>
            <path d="M5 1 15 24M17 1 7 24" /><circle cx="4" cy="27" r="3" stroke={BLUE} /><circle cx="17" cy="27" r="3" stroke={BLUE} />
          </Svg>
        </Tool>
      </ToolRow>
      <ToolRow>
        <Tool $w={40} aria-label="Copy">
          <Svg w={32} h={32}>
            <path d="M10 27H1V1H11L15 5" /><path d="M13 7H24L31 14V31H13Z" fill="#fff" /><path d="M23 7V15H31" />
            <path d="M18 21H27M18 25H27" stroke="#777" />
          </Svg>
        </Tool>
        <Tool $w={28} aria-label="Copy options"><Chevron /></Tool>
      </ToolRow>
      <ToolRow>
        <Tool $w={40} aria-label="Format painter">
          <Svg w={32} h={32}>
            <path d="M2 15 14 7 25 20 15 30Z" fill="#fff" stroke="#e28a45" /><path d="M6 20 24 20 15 29Z" fill="#f5d991" stroke="#e28a45" />
            <path d="M14 7 26 20 29 16 24 11 31 4 28 1 20 7 17 4Z" fill="#fff" />
          </Svg>
        </Tool>
      </ToolRow>
    </ThreeRows>
  </Group>
);

const FontGroup = () => (
  <Group $w={540} $pad={20}>
    <TwoRows>
      <ToolRow>
        <ToolRow $gap={5}>
          <SelectBox $w={281}><Select aria-label="Font"><option>Calibri (Body)</option></Select><Chevron /></SelectBox>
          <SelectBox $w={108}><Select aria-label="Font size"><option>11</option></Select><Chevron /></SelectBox>
        </ToolRow>
        <Tool $w={60} aria-label="Increase font size"><Svg w={32} h={28}><path d="M2 27 11.500 2H12.500L22 27M5.500 18H18.500" /><path d="M22 8 26 3 30 8" stroke={BLUE} /></Svg></Tool>
        <Tool $w={48} aria-label="Decrease font size"><Svg w={28} h={28}><path d="M2 27 9.500 7H10.500L18 27M5 19H15" /><path d="M19 3 23 8 27 3" stroke={BLUE} /></Svg></Tool>
      </ToolRow>
      <ToolRow>
        <Tool $w={50}><Glyph $kind="bold">B</Glyph></Tool>
        <Tool><Glyph $kind="italic">I</Glyph></Tool>
        <Tool><Glyph $kind="under">U</Glyph></Tool>
        <Tool $w={20} aria-label="Underline options"><Chevron /></Tool>
        <Rule $m={18} />
        <Tool $w={42} aria-label="Borders">
          <Svg w={30} h={30}><path d="M1 28V1H29V28M15 1V28M1 15H29" strokeDasharray="2 2" /><path d="M0 29H30" stroke="#000" /></Svg>
        </Tool>
        <Tool $w={32} aria-label="Border options"><Chevron /></Tool>
        <Rule $m={12} />
        <Tool $w={56} aria-label="Fill color">
          <Svg w={32} h={32}>
            <path d="M14 7 25 14 15 23 5 14 14 7V3Q17 -1 19 4V12" fill="#fff" />
            <path d="M23 9Q30 8 28 22Q24 20 23 9Z" fill={DEEP} stroke="none" /><rect y="24" width="32" height="8" fill="#fffe54" stroke="none" />
          </Svg>
        </Tool>
        <Tool $w={20} aria-label="Fill options"><Chevron /></Tool>
        <Tool $w={56} aria-label="Font color">
          <Svg w={32} h={32}><path d="M7 21 15.500 1H16.500L25 21M10 14H22" /><rect y="24" width="32" height="8" fill="#ea3323" stroke="none" /></Svg>
        </Tool>
        <Tool $w={20} aria-label="Font color options"><Chevron /></Tool>
      </ToolRow>
    </TwoRows>
  </Group>
);

const AlignGroup = () => (
  <Group $w={324} $pad={18}>
    <TwoRows>
      <ToolRow>
        <Tool aria-label="Top align"><Svg w={28} h={30}><path d="M0 1H28M5 9H23M0 17H28" /></Svg></Tool>
        <Tool aria-label="Middle align"><Lines rows={[[0, 28], [5, 23], [0, 28]]} /></Tool>
        <Tool aria-label="Bottom align"><Pressed $on><Svg w={28} h={30}><path d="M0 13H28M5 21H23M0 29H28" /></Svg></Pressed></Tool>
        <Rule $m={14} />
        <Tool aria-label="Orientation">
          <Svg w={32} h={32}>
            <text x="0" y="0" fontSize="19" fill={INK} stroke="none" fontFamily="Inter" transform="translate(12 24) rotate(-54)">ab</text>
            <path d="M11 31 29 11M20 11H30V21" stroke={BLUE} />
          </Svg>
        </Tool>
        <Tool $w={20} aria-label="Orientation options"><Chevron /></Tool>
      </ToolRow>
      <ToolRow>
        <Tool aria-label="Align left"><Lines rows={[[0, 28], [0, 20], [0, 28], [0, 20]]} /></Tool>
        <Tool aria-label="Center"><Lines rows={[[0, 28], [4, 24], [0, 28], [4, 24]]} /></Tool>
        <Tool aria-label="Align right"><Lines rows={[[0, 28], [8, 28], [0, 28], [8, 28]]} /></Tool>
        <Rule $m={14} />
        <Tool aria-label="Decrease indent"><Svg w={28} h={26}><path d="M0 1H28M16 9H28M16 17H28M0 25H28" /><path d="M13 13H1M6 8 1 13 6 18" stroke={BLUE} /></Svg></Tool>
        <Tool aria-label="Increase indent"><Svg w={28} h={26}><path d="M0 1H28M16 9H28M16 17H28M0 25H28" /><path d="M0 13H12M7 8 12 13 7 18" stroke={BLUE} /></Svg></Tool>
      </ToolRow>
    </TwoRows>
  </Group>
);

const WrapGroup = () => (
  <Group $w={110} $pad={14}>
    <TwoRows>
      <ToolRow>
        <Tool aria-label="Wrap text">
          <Svg w={28} h={32}>
            <text x="0" y="13" fontSize="19" fill={INK} stroke="none" fontFamily="Liberation Sans">ab</text>
            <text x="0" y="31" fontSize="18" fill={INK} stroke="none" fontFamily="Liberation Sans">c</text>
            <path d="M26 16Q27 26 14 25M19 20 14 25 19 30" stroke={BLUE} />
          </Svg>
        </Tool>
        <Tool $w={20} aria-label="Wrap options"><Chevron /></Tool>
      </ToolRow>
      <ToolRow>
        <Tool aria-label="Merge">
          <Svg w={30} h={30}>
            <path d="M1 1H29V29H1ZM15 1V7M15 23V29" /><rect x="1" y="7" width="28" height="16" fill="#fff" stroke={BLUE} />
            <path d="M5 15H25M9 11 5 15 9 19M21 11 25 15 21 19" stroke={BLUE} />
          </Svg>
        </Tool>
        <Tool $w={20} aria-label="Merge options"><Chevron /></Tool>
      </ToolRow>
    </TwoRows>
  </Group>
);

const Decimals = ({ flip }: { flip?: boolean }) => (
  <Svg w={32} h={32}>
    <text fill={INK} stroke="none" fontSize="17" fontFamily="Inter" textAnchor="end">
      <tspan x="32" y="14">{flip ? ".00" : ".0"}</tspan>
      <tspan x="32" y="30">{flip ? ".0" : ".00"}</tspan>
    </text>
    {flip ? <path d="M0 23H16M11 18 16 23 11 28" stroke={BLUE} /> : <path d="M16 9H1M6 4 1 9 6 14" stroke={BLUE} />}
  </Svg>
);

const NumberGroup = () => (
  <Group $w={352} $pad={20}>
    <TwoRows>
      <ToolRow><SelectBox $w={310}><Select aria-label="Number format"><option>General</option></Select><Chevron /></SelectBox></ToolRow>
      <ToolRow>
        <Tool $w={46}><Glyph $kind="big">$</Glyph></Tool>
        <Tool $w={28} aria-label="Currency options"><Chevron /></Tool>
        <Tool aria-label="Percent style">
          <Svg w={32} h={30} sw={2}><path d="M26 1 7 29" /><ellipse cx="8" cy="8" rx="6" ry="6.500" /><ellipse cx="25" cy="22" rx="6" ry="6.500" /></Svg>
        </Tool>
        <Tool $w={54} aria-label="Comma style">
          <Svg w={16} h={26}><path d="M1 7A7 7 0 0 1 15 8C15 17 10 23 2 25L1 24C6 21 9 17 9 14C4 15 1 12 1 7Z" fill={INK} stroke="none" /></Svg>
        </Tool>
        <Rule $m={12} />
        <Tool $w={54} aria-label="Increase decimal"><Decimals /></Tool>
        <Tool aria-label="Decrease decimal"><Decimals flip /></Tool>
      </ToolRow>
    </TwoRows>
  </Group>
);

const StylesGroup = () => (
  <Group $w={366} $pad={12}>
    <BigTool $w={136}>
      <BigIcon>
        <Svg w={56} h={44}>
          <rect x="1" y="1" width="54" height="42" fill="#fff" /><path d="M1 15H55M1 29H55M11 1V43M45 1V43" stroke="#7a7a7a" />
          <rect x="11" y="1" width="25" height="14" fill="#f2989c" stroke="#cc3b2b" /><rect x="11" y="15" width="16" height="14" fill={PALE} stroke={DEEP} />
          <rect x="11" y="29" width="29" height="14" fill="#f2989c" stroke="#cc3b2b" />
        </Svg>
        <Chevron />
      </BigIcon>
      <span>Conditional<br />Formatting</span>
    </BigTool>
    <BigTool $w={96}>
      <BigIcon $gap={10}>
        <Svg w={60} h={44}>
          <rect x="1" y="1" width="54" height="42" fill="#fff" /><path d="M1 15H55M1 29H19M19 1V43M37 1V15" stroke="#7a7a7a" />
          <path d="M19 15H55V43H19Z" fill={PALE} stroke={DEEP} /><path d="M37 15V43M19 29H55" stroke={DEEP} />
          <path d="M55 15V1H1V43H19" /><Brush />
        </Svg>
        <Chevron />
      </BigIcon>
      <span>Format<br />as Table</span>
    </BigTool>
    <BigTool $w={104}>
      <BigIcon $gap={10}>
        <Svg w={60} h={44}>
          <rect x="1" y="1" width="54" height="42" fill="#fff" /><path d="M1 11H55M1 33H55M11 1V43M45 1V43" stroke="#7a7a7a" />
          <rect x="11" y="11" width="34" height="22" fill={PALE} stroke={DEEP} /><Brush />
        </Svg>
        <Chevron />
      </BigIcon>
      <span>Cell<br />Styles</span>
    </BigTool>
  </Group>
);

const CellsGroup = () => (
  <Group $w={194} $pad={25}>
    <ThreeRows>
      <LineTool>
        <Svg w={32} h={28}>
          <rect x="1" y="1" width="30" height="26" fill="#fff" /><path d="M11 1V27M21 1V27M1 9H31M1 19H31" stroke="#7a7a7a" />
          <rect x="13" y="9" width="18" height="10" fill={PALE} stroke={DEEP} /><path d="M22 9V19" stroke={DEEP} />
          <path d="M0 7H14V20H0Z" fill="#fff" stroke="none" /><path d="M15 13H1M7 7 1 13 7 19" stroke={BLUE} />
        </Svg>
        Insert <Chevron />
      </LineTool>
      <LineTool>
        <Svg w={32} h={28}>
          <path d="M1 1H31V27H1Z" fill="#fff" stroke="none" /><path d="M1 9V1H31V6M1 19V27H31V22" /><path d="M11 1V9M21 1V7M11 19V27M21 21V27M1 9H9M1 19H9" />
          <rect x="7" y="9" width="11" height="10" fill={PALE} stroke={DEEP} /><path d="M20 8 31 20M31 8 20 20" stroke="#e0504a" />
        </Svg>
        Delete <Chevron />
      </LineTool>
      <LineTool>
        <Svg w={32} h={32}>
          <path d="M3 5H1V31H31V5H29" fill="#fff" /><path d="M1 13H31M1 23H31M10 5V31M22 5V31" stroke="#7a7a7a" />
          <rect x="9" y="13" width="14" height="10" fill={PALE} stroke={DEEP} /><path d="M7 0V6M25 0V6M7 3H25" stroke={BLUE} />
        </Svg>
        Format <Chevron />
      </LineTool>
    </ThreeRows>
  </Group>
);

const EditGroup = () => (
  <Group $w={310} $pad={24}>
    <ThreeRows>
      <ToolRow>
        <Tool $w={34} aria-label="AutoSum"><Svg w={26} h={28}><path d="M25 5V1H2L15 14 2 27H25V23" /></Svg></Tool>
        <Tool $w={34} aria-label="Sum options"><Chevron /></Tool>
      </ToolRow>
      <ToolRow>
        <Tool $w={34} aria-label="Fill"><Svg w={32} h={28}><rect x="1" y="1" width="30" height="26" fill="#fff" /><path d="M1 5H31" /><path d="M16 8V23M10 17 16 23 22 17" stroke={BLUE} /></Svg></Tool>
        <Tool $w={34} aria-label="Fill options"><Chevron /></Tool>
      </ToolRow>
      <ToolRow>
        <Tool $w={34} aria-label="Clear"><Svg w={32} h={30} stroke="#8d3f9c"><path d="M19 1 30 12 12 29 1 19Z" fill="#fff" /><path d="M8 12 19 22 12 29 1 19Z" fill="#cf9bd8" /></Svg></Tool>
        <Tool $w={34} aria-label="Clear options"><Chevron /></Tool>
      </ToolRow>
    </ThreeRows>
    <BigTool $w={94}>
      <BigIcon>
        <Svg w={56} h={52}>
          <path d="M1 24 9.500 1H10.500L19 24M4 16H16" stroke={BLUE} /><path d="M2 29H17L2 51H18" />
          <path d="M25 13H55V20L43 30V43H37V30L25 20Z" fill="#fff" />
        </Svg>
        <Chevron />
      </BigIcon>
      <span>Sort &amp;<br />Filter</span>
    </BigTool>
    <BigTool $w={104}>
      <BigIcon>
        <Svg w={58} h={58}><circle cx="37" cy="21" r="20" fill="#fff" /><path d="M23 35 1 57" /></Svg>
        <Chevron />
      </BigIcon>
      <span>Find &amp;<br />Select</span>
    </BigTool>
  </Group>
);

const SensitivityArt = () => (
  <Svg w={52} h={60} stroke="#b5d3ea">
    <path d="M24 4H1V58H41V34" fill="#fafafa" />
    <path d="M8 26 16 19 34 38 27 46Z" fill="#fafafa" /><path d="M14 27 17 24 29 37 26 40Z" />
    <path d="M24 14 30 3 45 18 39 31Z" fill="#fafafa" /><path d="M24 13 40 30" strokeWidth="5" /><path d="M37 9 43 1 52 10 46 17Z" fill="#fafafa" />
  </Svg>
);

const RibbonTail = () => (
  <>
    <Group $w={154}>
      <BigTool $w={152} $muted>
        <BigIcon $gap={12}><SensitivityArt /><Chevron c="#b9b9b9" /></BigIcon>
        Sensitivity
      </BigTool>
    </Group>
    <Group $w={130}>
      <BigTool $w={128}>
        <BigIcon>
          <Svg w={58} h={58} stroke="#d4572f">
            <rect x="1" y="1" width="56" height="56" fill="#fff" /><rect x="6" y="6" width="21" height="20" /><rect x="31" y="6" width="21" height="20" />
            <rect x="6" y="32" width="21" height="20" /><rect x="31" y="32" width="21" height="20" />
          </Svg>
        </BigIcon>
        Add-ins
      </BigTool>
    </Group>
    <Group $w={126} $last>
      <BigTool $w={126}>
        <BigIcon>
          <Svg w={64} h={64}>
            <rect x="1" y="1" width="62" height="62" fill="#fff" /><rect x="2" y="2" width="60" height="8" fill="#c9c7c4" stroke="none" /><path d="M1 10H63" stroke="#8a8a8a" />
            <path d="M1 28H63M1 44H63M21 44V63M42 44V63" stroke="#8a8a8a" /><rect x="1" y="1" width="62" height="62" />
            <path d="M43 42 63 63" stroke="#fff" strokeWidth="6" />
            <circle cx="30" cy="27" r="20" fill="#fff" /><path d="M44 42 63 63" />
            <rect x="19" y="24" width="7" height="11" fill="#c9c7c4" stroke="#777" /><rect x="33" y="19" width="7" height="16" fill={PALE} stroke={DEEP} /><rect x="26" y="15" width="7" height="20" fill="#fff" />
          </Svg>
        </BigIcon>
        <span>Analyze<br />Data</span>
      </BigTool>
    </Group>
  </>
);

const TrayIcons = () => (
  <>
    <Svg w={27} h={27} stroke="#eceaf6" sw={2.5}><circle cx="13.500" cy="13.500" r="12" /><path d="M10 8 19 13.500 10 19Z" fill="#eceaf6" stroke="none" /></Svg>
    <Svg w={27} h={27} stroke="#eceaf6" sw={2.5}><circle cx="13.500" cy="13.500" r="12" /><circle cx="13.500" cy="10" r="4.500" fill="#eceaf6" stroke="none" /><path d="M5 21C8 15 19 15 22 21C18 26 9 26 5 21Z" fill="#eceaf6" stroke="none" /></Svg>
    <Svg w={51} h={24} stroke="#8f87cf" sw={2}><rect x="1" y="1" width="44" height="22" rx="6" /><rect x="4" y="4" width="18" height="16" rx="3" fill="#f2f0fa" stroke="none" /><path d="M48 8Q51 12 48 16Z" fill="#8f87cf" /></Svg>
    <Svg w={34} h={25} stroke="#eceaf6" sw={4}><path d="M2 8Q17 -4 32 8M8 15Q17 7 26 15" /><path d="M17 25 11 19Q17 14 23 19Z" fill="#eceaf6" stroke="none" /></Svg>
    <Svg w={26} h={26} stroke="#eceaf6" sw={3}><circle cx="11" cy="11" r="9" /><path d="M17 17 25 25" /></Svg>
    <Svg w={28} h={27} stroke="#eceaf6" sw={2.5}><rect x="1.500" y="1.500" width="25" height="10" rx="5" /><circle cx="7" cy="6.500" r="4" fill="#eceaf6" stroke="none" /><rect y="15" width="28" height="12" rx="6" fill="#eceaf6" stroke="none" /><circle cx="21.500" cy="21" r="4" fill="#26149a" stroke="none" /></Svg>
    <svg width="28" height="28" viewBox="0 0 28 28">
      <defs><radialGradient id="siri"><stop offset="0" stopColor="#fff" /><stop offset=".35" stopColor="#b7d4e8" /><stop offset="1" stopColor="#28324f" /></radialGradient></defs>
      <circle cx="14" cy="14" r="14" fill="url(#siri)" /><path d="M1 9Q10 6 14 14 8 22 2 19Z" fill="#c8405f" fillOpacity=".75" /><path d="M8 2Q22 0 26 9 18 12 14 14Z" fill="#3e9d84" fillOpacity=".75" /><path d="M14 14Q24 14 25 21 18 28 12 26Z" fill="#4d8fd8" fillOpacity=".6" />
    </svg>
  </>
);

export default function App() {
  const G = "#5d5d5d";
  return (
    <Desktop>
      <GlobalStyle />
      <MenuBar>
        <FaApple size={32} aria-label="Apple menu" />
        <Menus>
          {["Excel", "File", "Edit", "View", "Insert", "Format", "Tools", "Data", "Window", "Help"].map((m, i) => (
            <MenuItem key={m} $strong={i === 0}>{m}</MenuItem>
          ))}
        </Menus>
        <Tray><TrayIcons /><Clock>{"Mon Jan 27  8:31 PM"}</Clock></Tray>
      </MenuBar>

      <Window>
        <TitleBar>
          <TitleSide>
            <Lights>
              <Light $c="#ec6a5e" $edge="#d5564b" aria-label="Close" /><Light $c="#f4bf4f" $edge="#dba53b" aria-label="Minimize" /><Light $c="#61c554" $edge="#50ab42" aria-label="Zoom" />
            </Lights>
            <AutoSave>AutoSave<Switch type="checkbox" /></AutoSave>
            <IconButton aria-label="Home"><Svg w={28} h={30} stroke={G}><path d="M1 12 14 1 27 12V27Q27 29 25 29H19V20Q19 18 17 18H11Q9 18 9 20V29H3Q1 29 1 27Z" /></Svg></IconButton>
            <IconButton aria-label="Save"><Svg w={28} h={28} stroke={G}><path d="M3 1H22L27 6V25Q27 27 25 27H3Q1 27 1 25V3Q1 1 3 1ZM7 1V8Q7 9 8 9H18Q19 9 19 8V1M5 27V17Q5 15 7 15H21Q23 15 23 17V27" /></Svg></IconButton>
            <IconButton aria-label="Save as"><Svg w={30} h={28} stroke={G}><path d="M11 27H3Q1 27 1 25V3Q1 1 3 1H22L27 6V12M7 1V8Q7 9 8 9H18Q19 9 19 8V1M5 27V17Q5 15 7 15H18" /><path d="M13 28 15 22 25 13Q30 12 29 17L19 27Z" fill={G} /></Svg></IconButton>
            <IconButton aria-label="Undo"><Svg w={24} h={31} stroke={G}><path d="M1 0V11H12M1 11 9 3Q18 -3 22 6 24 13 18 20L6 31" /></Svg><Chevron /></IconButton>
            <IconButton aria-label="Redo"><Svg w={28} h={28} stroke="#c0c0c0"><path d="M24 6A13 13 0 1 0 27 14M26 0V8H18" /></Svg></IconButton>
            <IconButton aria-label="More"><Svg w={28} h={6}><g fill={G} stroke="none"><circle cx="3" cy="3" r="2.500" /><circle cx="13" cy="3" r="2.500" /><circle cx="23" cy="3" r="2.500" /></g></Svg></IconButton>
          </TitleSide>
          <DocTitle>
            <svg width="27" height="30" viewBox="0 0 27 30">
              <path d="M4 1H18L26 9V29H4Z" fill="#fff" stroke="#c4c4c4" /><path d="M18 1V9H26" fill="none" stroke="#c4c4c4" />
              <path d="M16 12H23M16 15.500H23M16 19H23" stroke="#3d8a55" strokeWidth="2" strokeDasharray="3 1" />
              <rect y="7" width="15" height="16" rx="2" fill="#377d48" /><text x="7.500" y="19" textAnchor="middle" fontSize="12" fontWeight="700" fill="#fff" fontFamily="Inter">X</text>
            </svg>
            Module 04 Course Project Template (1)
            <Svg w={16} h={10} stroke="#7d7d7d" sw={3}><path d="M2 2 8 8 14 2" strokeLinecap="round" /></Svg>
          </DocTitle>
          <TitleSide $end>
            <IconButton aria-label="Search"><Svg w={30} h={30} stroke={G}><circle cx="12" cy="12" r="11" /><path d="M20 20 29 29" /></Svg></IconButton>
            <IconButton aria-label="Collaborators"><Svg w={33} h={32} stroke={G}><circle cx="10" cy="13" r="5" /><path d="M3 21H18Q20 21 20 23C20 28 16 31 10.500 31S1 28 1 23Q1 21 3 21ZM20 1H29Q32 1 32 4V9Q32 12 29 12H26L21 16V12Q17 12 17 8V4Q17 1 20 1Z" /></Svg></IconButton>
          </TitleSide>
        </TitleBar>

        <TabRow>
          <RibbonTabs>
            {["Home", "Insert", "Draw", "Page Layout", "Formulas", "Data", "Review", "View", "Automate"].map((t, i) => (
              <RibbonTab key={t} $active={i === 0}>{t}</RibbonTab>
            ))}
          </RibbonTabs>
          <TabActions>
            <ActionButton><Svg w={32} h={30} stroke="#111"><path d="M4 1H28Q31 1 31 4V20Q31 23 28 23H17L9 29V23H4Q1 23 1 20V4Q1 1 4 1Z" /></Svg>Comments</ActionButton>
            <ActionButton $primary>
              <Svg w={32} h={28} stroke="#fff"><path d="M12 3H5Q1 3 1 7V23Q1 27 5 27H21Q25 27 25 23V20" /><path d="M19 1 30 10 19 19V14Q11 14 7 20 8 8 19 6Z" strokeLinejoin="round" /></Svg>
              Share
              <Svg w={16} h={10} stroke="#fff"><path d="M1 1 8 8 15 1" /></Svg>
            </ActionButton>
          </TabActions>
        </TabRow>

        <Ribbon>
          <Clipboard /><FontGroup /><AlignGroup /><WrapGroup /><NumberGroup /><StylesGroup /><CellsGroup /><EditGroup /><RibbonTail />
        </Ribbon>

        <FormulaBar>
          <NameBox>
            <NameInput aria-label="Name box" defaultValue="K24" />
            <svg width="14" height="34" viewBox="0 0 14 34"><path d="M7 0 14 11H0ZM0 23H14L7 34Z" fill="#5f5f5f" /></svg>
          </NameBox>
          <FormulaTools>
            <button aria-label="Cancel"><Svg w={22} h={22} stroke="#cbcbcb" sw={4}><path d="M2 2 20 20M20 2 2 20" strokeLinecap="round" /></Svg></button>
            <button aria-label="Enter"><Svg w={28} h={22} stroke="#cbcbcb" sw={4}><path d="M2 12 10 20 26 2" strokeLinecap="round" /></Svg></button>
            <Fx>fx</Fx>
          </FormulaTools>
          <FormulaInput aria-label="Formula" />
          <DropButton aria-label="Expand formula bar"><svg width="14" height="11" viewBox="0 0 14 11"><path d="M0 0H14L7 11Z" fill="#5f5f5f" /></svg></DropButton>
        </FormulaBar>
        <DoubleLine />

        <SheetArea>
          <Scroller><Sheet /></Scroller>
          <HScroll />
        </SheetArea>

        <SheetTabs>
          <TabArrows>
            <svg width="14" height="20" viewBox="0 0 14 20"><path d="M14 0V20L0 10Z" fill="#b4b4b4" /></svg>
            <svg width="14" height="20" viewBox="0 0 14 20"><path d="M0 0V20L14 10Z" fill="#b4b4b4" /></svg>
          </TabArrows>
          <SheetTab>IRR &amp; NPV</SheetTab>
          <AddTab aria-label="Add sheet"><Plus /></AddTab>
        </SheetTabs>

        <StatusBar>
          <span>Ready</span>
          <Access>
            <Svg w={34} h={31} stroke="#5d5d5d"><circle cx="14" cy="4" r="3.500" /><path d="M11 6 5 4Q1 4 2 8L9 12V19L5 27Q6 31 9 28L12 21M17 6 23 4Q27 4 26 8L19 12V18M17 25 21 29 32 17" /></Svg>
            Accessibility: Good to go
          </Access>
          <StatusRight>
            <ViewButton $on aria-label="Normal view"><Svg w={26} h={26} stroke="#fff"><path d="M1 1H25V25H1ZM9 1V25M17 1V25M1 9H25M1 17H25" /></Svg></ViewButton>
            <ViewButton aria-label="Page layout view"><Svg w={28} h={26} stroke="#5d5d5d"><path d="M1 1H27V25H1ZM7 5H21V21H7ZM10 10H18M10 13H18M10 17H18" /></Svg></ViewButton>
            <ViewButton aria-label="Page break view"><Svg w={28} h={26} stroke="#5d5d5d"><path d="M1 1H27V25H1ZM1 15H17V1M9 1V15" /></Svg></ViewButton>
            <ZoomControl>
              <Svg w={16} h={4} stroke="#5a5a5a" sw={4}><path d="M0 2H16" /></Svg>
              <ZoomRange type="range" min="0" max="100" defaultValue="50" aria-label="Zoom" />
              <Svg w={16} h={16} stroke="#5a5a5a" sw={4}><path d="M8 0V16M0 8H16" /></Svg>
            </ZoomControl>
            <span>100%</span>
          </StatusRight>
        </StatusBar>
      </Window>

      <Dock>
        {DOCK.map((d, i) =>
          d === "rule" ? <DockRule key={i} /> : (
            <DockItem key={d.name} aria-label={d.label}>
              {art[d.name]}
              {d.badge && <Badge>{d.badge}</Badge>}
              {d.tag && <NewTag>{d.tag}</NewTag>}
              {d.run && <RunDot />}
            </DockItem>
          )
        )}
      </Dock>
    </Desktop>
  );
}
